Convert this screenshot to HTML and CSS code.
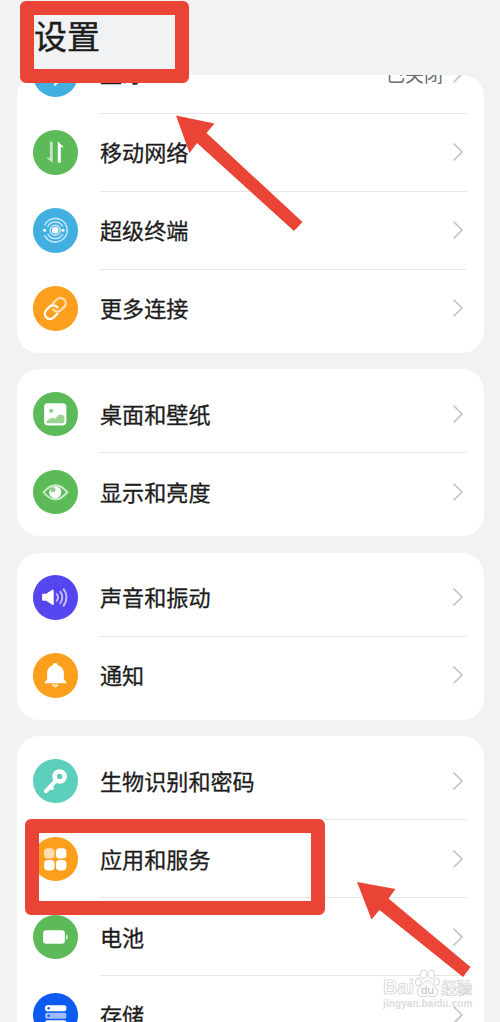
FILE: index.html
```html
<!DOCTYPE html>
<html lang="zh-CN">
<head>
    <meta charset="UTF-8">
    <meta name="viewport" content="width=device-width, initial-scale=1.0">
    <title>设置</title>
    <link rel="stylesheet" href="styles.css">
</head>
<body>
    <svg class="defs" width="0" height="0">
        <symbol id="chevron" viewBox="0 0 12 20">
            <path d="M1.5 1.5 L10 10 L1.5 18.5" fill="none" stroke="#c4c4c5" stroke-width="1.7"/>
        </symbol>
    </svg>

    <div class="screen">
        <header class="header">
            <h1>设置</h1>
        </header>

        <main class="list">
            <section class="card card-first">
                <div class="row row-cut">
                    <svg class="icon blue" viewBox="0 0 44 44"><path d="M16 17 L27 27 L22 32 V11 L27 16 L16 26" fill="none" stroke="#fff" stroke-width="2"/></svg>
                    <div class="content"><span class="label">蓝牙</span><span class="value">已关闭</span><svg class="chevron"><use href="#chevron"/></svg></div>
                </div>
                <div class="row">
                    <svg class="icon green" viewBox="0 0 44 44">
                        <path d="M19.5 11.5 V32.5 L13 27.5 H16.7 V11.5 Z" fill="#fff" opacity=".65"/>
                        <path d="M24.5 32.5 V11 L30.5 17 H27.5 V32.5 Z" fill="#fff"/>
                    </svg>
                    <div class="content"><span class="label">移动网络</span><svg class="chevron"><use href="#chevron"/></svg></div>
                </div>
                <div class="row">
                    <svg class="icon blue" viewBox="0 0 44 44">
                        <g fill="none" stroke="#fff" stroke-width="1.5" opacity=".7">
                            <path d="M11.5 17 A11.7 11.7 0 1 1 11.5 27"/>
                            <path d="M14.5 18.5 A8.3 8.3 0 0 1 29.5 18.5 M14.5 25.5 A8.3 8.3 0 0 0 29.5 25.5"/>
                            <circle cx="22" cy="22" r="5"/>
                        </g>
                        <circle cx="22" cy="22" r="3.2" fill="#fff"/>
                        <circle cx="11.5" cy="22" r="1.5" fill="#fff"/>
                        <circle cx="29.7" cy="22" r="1.5" fill="#fff"/>
                    </svg>
                    <div class="content"><span class="label">超级终端</span><svg class="chevron"><use href="#chevron"/></svg></div>
                </div>
                <div class="row">
                    <svg class="icon orange" viewBox="0 0 44 44">
                        <g fill="none" stroke="#fff" stroke-width="2.2" stroke-linecap="round" transform="translate(9.5 9.700) scale(1.040)">
                            <path d="M10 13 a5 5 0 0 0 7.540 .540 l3 -3 a5 5 0 0 0 -7.070 -7.070 l-3.500 3.500" opacity=".65"/>
                            <path d="M14 11 a5 5 0 0 0 -7.540 -.540 l-3 3 a5 5 0 0 0 7.070 7.070 l3.500 -3.500"/>
                        </g>
                    </svg>
                    <div class="content"><span class="label">更多连接</span><svg class="chevron"><use href="#chevron"/></svg></div>
                </div>
            </section>

            <section class="card">
                <div class="row">
                    <svg class="icon green" viewBox="0 0 44 44">
                        <rect x="11" y="11" width="22" height="22" rx="3.5" fill="#fff"/>
                        <circle cx="18" cy="18.5" r="2" fill="#8fce8a"/>
                        <path d="M13.5 31 V29 Q18 23.5 22 26.5 Q26.5 19.5 31 24 V29 Q31 31 29 31 Z" fill="#9bd397"/>
                    </svg>
                    <div class="content"><span class="label">桌面和壁纸</span><svg class="chevron"><use href="#chevron"/></svg></div>
                </div>
                <div class="row">
                    <svg class="icon green" viewBox="0 0 44 44">
                        <path d="M10.5 22 Q22 8 34 22 Q22 36 10.5 22 Z" fill="none" stroke="#fff" stroke-width="1.9" opacity=".7"/>
                        <circle cx="22" cy="22" r="6" fill="#fff"/>
                        <circle cx="19.7" cy="19.5" r="2.5" fill="#8fce8a"/>
                    </svg>
                    <div class="content"><span class="label">显示和亮度</span><svg class="chevron"><use href="#chevron"/></svg></div>
                </div>
            </section>

            <section class="card">
                <div class="row">
                    <svg class="icon purple" viewBox="0 0 44 44">
                        <path d="M10 18.5 H13 L19 14.5 Q20.5 14 20.5 16 V28.5 Q20.5 30.5 19 29.5 L13 25.5 H10 Q9 25.5 9 24.5 V19.5 Q9 18.5 10 18.5 Z" fill="#fff"/>
                        <g fill="none" stroke="#fff" stroke-width="1.9" stroke-linecap="round" opacity=".65">
                            <path d="M23.5 19 Q26 22 23.5 25.5"/>
                            <path d="M27 16.5 Q31 22 27 28"/>
                            <path d="M30.3 14 Q36 22 30.3 30.5"/>
                        </g>
                    </svg>
                    <div class="content"><span class="label">声音和振动</span><svg class="chevron"><use href="#chevron"/></svg></div>
                </div>
                <div class="row">
                    <svg class="icon orange" viewBox="0 0 44 44">
                        <path d="M22 10 Q24 10 24.5 12 Q30.5 14 30.5 20 V26 L33 29 V30 H11.5 V29 L14 26 V20 Q14 14 19.5 12 Q20 10 22 10 Z" fill="#fff"/>
                        <path d="M18.5 31 H25.5 Q24.5 34 22 34 Q19.5 34 18.5 31 Z" fill="#fff" opacity=".7"/>
                    </svg>
                    <div class="content"><span class="label">通知</span><svg class="chevron"><use href="#chevron"/></svg></div>
                </div>
            </section>

            <section class="card">
                <div class="row">
                    <svg class="icon teal" viewBox="0 0 44 44">
                        <circle cx="26.3" cy="17.3" r="5" fill="none" stroke="#fff" stroke-width="4.5"/>
                        <path d="M23 21 L12.8 31.8 M17.5 27.5 L18.7 28.7" stroke="#fff" stroke-width="4" stroke-linecap="round"/>
                    </svg>
                    <div class="content"><span class="label">生物识别和密码</span><svg class="chevron"><use href="#chevron"/></svg></div>
                </div>
                <div class="row">
                    <svg class="icon orange" viewBox="0 0 44 44" fill="#fff">
                        <rect x="11" y="11" width="10.3" height="10.3" rx="3.5" opacity=".65"/>
                        <rect x="22.7" y="11" width="10.3" height="10.3" rx="3.5"/>
                        <rect x="11" y="22.7" width="10.3" height="10.3" rx="3.5"/>
                        <rect x="22.7" y="22.7" width="10.3" height="10.3" rx="3.5"/>
                    </svg>
                    <div class="content"><span class="label">应用和服务</span><svg class="chevron"><use href="#chevron"/></svg></div>
                </div>
                <div class="row">
                    <svg class="icon green" viewBox="0 0 44 44" fill="#fff">
                        <rect x="10" y="15" width="21.5" height="13.5" rx="3"/>
                        <path d="M32.5 19 Q34.5 19.5 34.5 22 Q34.5 24.5 32.5 25 Z" opacity=".65"/>
                    </svg>
                    <div class="content"><span class="label">电池</span><svg class="chevron"><use href="#chevron"/></svg></div>
                </div>
                <div class="row">
                    <svg class="icon navy" viewBox="0 0 44 44" fill="#fff">
                        <rect x="12" y="12" width="21" height="6" rx="2"/>
                        <rect x="12" y="19.5" width="21" height="6" rx="2" opacity=".6"/>
                        <rect x="12" y="27" width="21" height="6" rx="2"/>
                        <g fill="#0c5af0"><circle cx="15.5" cy="15" r="1.2"/><circle cx="15.5" cy="22.5" r="1.2"/><circle cx="15.5" cy="30" r="1.2"/></g>
                    </svg>
                    <div class="content"><span class="label">存储</span><svg class="chevron"><use href="#chevron"/></svg></div>
                </div>
            </section>
        </main>

        <!-- highlights drawn over the list -->
        <div class="frame frame-title"></div>
        <div class="frame frame-apps"></div>
        <svg class="arrows" viewBox="0 0 500 1022" fill="#e94435">
            <path d="M176 115.5 L214.5 123.5 L206.5 133 L302.5 222 L294 231 L197 143 L189.5 153 Z"/>
            <path d="M357 882 L395.5 889 L388.5 898.5 L470.5 967 L463 977 L379.5 910 L371.5 919.5 Z"/>
        </svg>

        <div class="watermark">
            <div class="brand">
                <span>Bai</span>
                <svg class="paw" viewBox="0 0 28 30">
                    <g fill="#fff" stroke="#cfcfcf" stroke-width="1">
                        <ellipse cx="4.5" cy="13.5" rx="3" ry="4"/>
                        <ellipse cx="10" cy="5.5" rx="3.3" ry="4.3"/>
                        <ellipse cx="18" cy="5.5" rx="3.3" ry="4.3"/>
                        <ellipse cx="23.5" cy="13" rx="3" ry="4"/>
                        <path d="M14 12 C18 12 19 17 22.5 19.5 C27 23 24 29 19 28.5 Q14 27.5 9 28.5 C3.5 29 1.5 23 5.5 19.5 C9 17 10 12 14 12 Z"/>
                    </g>
                    <text x="14" y="26" text-anchor="middle">du</text>
                </svg>
                <span class="brand-cn">经验</span>
            </div>
            <div class="site">jingyan.baidu.com</div>
        </div>
    </div>
</body>
</html>
```
FILE: styles.css
```css
body {
    margin: 0;
    background-color: #f0f2f4;
    color: #1c1c1c;
    font-family: "Noto Sans CJK SC", sans-serif;
}

.defs {
    position: absolute;
}

.screen {
    position: relative;
    width: 500px;
    height: 1022px;
    overflow: hidden;
}

.header {
    height: 75px;
    padding-left: 34px;
    box-sizing: border-box;
}

h1 {
    margin: 0;
    font-size: 33px;
    font-weight: 400;
    line-height: 71px;
    -webkit-text-stroke: 0.4px #1c1c1c;
}

.list {
    display: flex;
    flex-direction: column;
    gap: 16.5px;
    padding: 0 16.5px 0 17px;
}

.card {
    padding: 6px 16.5px 5px 16px;
    background-color: white;
    border-radius: 22px;
}

.card-first {
    padding-top: 0;
    overflow: hidden;
}

.row {
    display: flex;
    align-items: center;
    height: 78px;
}

/* top row is scrolled halfway under the header */
.row-cut {
    margin-top: -39.5px;
}

.icon {
    flex: none;
    width: 44.5px;
    height: 44.5px;
    margin-right: 22px;
    border-radius: 50%;
}

.blue { background-color: #42afe1; }
.green { background-color: #5dba58; }
.orange { background-color: #fb9f1c; }
.purple { background-color: #5546f0; }
.teal { background-color: #5dcfbd; }
.navy { background-color: #0c5af0; }

.content {
    flex: 1;
    display: flex;
    align-items: center;
    height: 100%;
    box-sizing: border-box;
    padding: 0 3px 0 0.5px;
    border-bottom: 1px solid #e7e7e7;
}

.row:last-child .content {
    border-bottom-color: transparent;
}

.label {
    padding-bottom: 2px;
    font-size: 22.1px;
    line-height: 32px;
    -webkit-text-stroke: 0.3px #1c1c1c;
}

.row-cut .label {
    padding-bottom: 4px;
}

.value {
    margin-left: auto;
    margin-right: 9px;
    font-size: 19px;
    line-height: 28px;
    color: #6b6b6b;
}

.chevron {
    flex: none;
    width: 12px;
    height: 20px;
    margin-left: auto;
}

.value + .chevron {
    margin-left: 0;
}

.frame {
    position: absolute;
    box-sizing: border-box;
    border: 14px solid #e94435;
    border-radius: 6px;
}

.frame-title {
    left: 20px;
    top: 1px;
    width: 169px;
    height: 82px;
}

.frame-apps {
    left: 25px;
    top: 819px;
    width: 300px;
    height: 96px;
}

.arrows {
    position: absolute;
    left: 0;
    top: 0;
    width: 500px;
    height: 1022px;
}

.watermark {
    position: absolute;
    left: 383px;
    top: 968px;
    width: 92px;
    font-family: "Liberation Sans", "Noto Sans CJK SC", sans-serif;
    font-weight: bold;
    color: white;
    -webkit-text-stroke: 0.6px #c9c9c9;
}

.brand {
    display: flex;
    align-items: flex-end;
    height: 30px;
    font-size: 20px;
    line-height: 22px;
}

.paw {
    flex: none;
    width: 27px;
    height: 29px;
}

.paw text {
    font-size: 12px;
    font-weight: 400;
    fill: #bdbdbd;
    -webkit-text-stroke: 0;
}

.brand-cn {
    font-family: "Noto Sans CJK SC", sans-serif;
    font-size: 15.5px;
}

.site {
    font-size: 10px;
    line-height: 12px;
    letter-spacing: 0.1px;
    color: #dcdcdc;
    -webkit-text-stroke: 0;
}
```
